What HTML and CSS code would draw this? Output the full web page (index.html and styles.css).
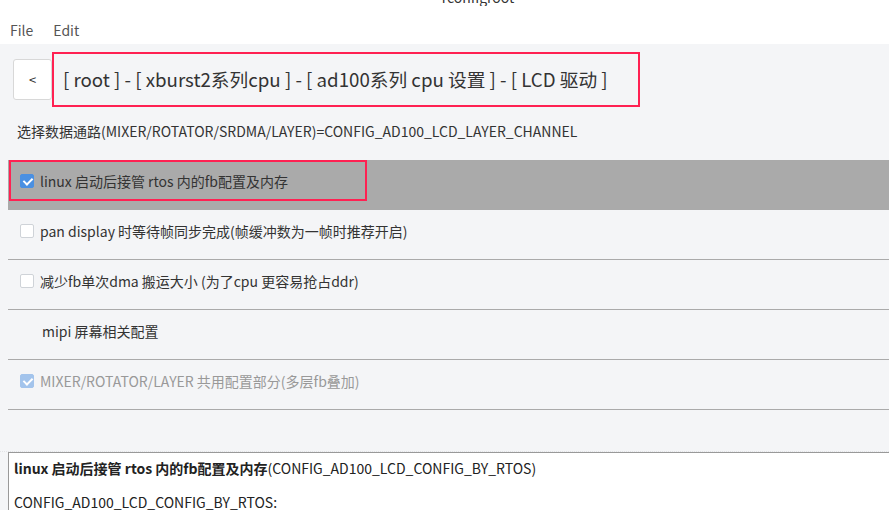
FILE: index.html
```html
<!DOCTYPE html>
<html>
    <head>
        <title>rconfigroot</title>
        <meta charset="UTF-8">
        <meta name="viewport" content="width=device-width, initial-scale=1.0">
        <link rel="stylesheet" href="styles.css">
    </head>
    <body>
        <header class="top">
            <div class="titlebar"><span>rconfigroot</span></div>
            <ul class="menu">
                <li>File</li>
                <li>Edit</li>
            </ul>
        </header>
        <section class="main">
            <div class="toolbar">
                <button class="back">&lt;</button>
                <div class="crumbs">[ root ] - [ xburst2系列cpu ] - [ ad100系列 cpu 设置 ] - [ LCD 驱动 ]</div>
            </div>
            <p class="desc">选择数据通路(MIXER/ROTATOR/SRDMA/LAYER)=CONFIG_AD100_LCD_LAYER_CHANNEL</p>
            <div class="rows">
                <div class="row selected">
                    <span class="box checked"></span>
                    <span>linux 启动后接管 rtos 内的fb配置及内存</span>
                    <div class="mark"></div>
                </div>
                <div class="row">
                    <span class="box"></span>
                    <span>pan display 时等待帧同步完成(帧缓冲数为一帧时推荐开启)</span>
                </div>
                <div class="row">
                    <span class="box"></span>
                    <span>减少fb单次dma 搬运大小 (为了cpu 更容易抢占ddr)</span>
                </div>
                <div class="row menuitem">
                    <span>mipi 屏幕相关配置</span>
                </div>
                <div class="row disabled">
                    <span class="box checked"></span>
                    <span>MIXER/ROTATOR/LAYER 共用配置部分(多层fb叠加)</span>
                </div>
            </div>
            <div class="splitter"></div>
            <div class="help">
                <p><strong>linux 启动后接管 rtos 内的fb配置及内存</strong>(CONFIG_AD100_LCD_CONFIG_BY_RTOS)</p>
                <p>CONFIG_AD100_LCD_CONFIG_BY_RTOS:</p>
            </div>
        </section>
    </body>
</html>
```

FILE: styles.css
```css
* {
    box-sizing: border-box;
}

body {
    margin: 0;
    height: 510px;
    overflow: hidden;
    font-family: "Noto Sans CJK SC", "Noto Sans", sans-serif;
    color: #333;
    background: #fff;
}

/* window title, cut off at the top */
.titlebar {
    height: 6px;
    overflow: hidden;
    text-align: center;
    padding-left: 67px;
    font-size: 14px;
    line-height: 20px;
    color: #333;
}
.titlebar span {
    display: block;
    margin-top: -13px;
}

.menu {
    list-style-type: none;
    margin: 0;
    padding: 14px 0 0 10px;
    height: 38px;
    display: flex;
    gap: 20px;
    font-size: 14px;
    color: #555;
}

.main {
    background: #f4f5f7;
    height: 466px;
    padding-top: 8px;
}

.toolbar {
    display: flex;
    align-items: center;
}

.back {
    margin-left: 13px;
    width: 39px;
    height: 41px;
    background: #fff;
    border: 1px solid #d8d8d8;
    border-radius: 3px;
    font-family: inherit;
    font-size: 13px;
    color: #333;
    padding: 0;
}

.crumbs {
    width: 588px;
    height: 55px;
    border: 2px solid #ff2152;
    padding-left: 9px;
    font-size: 18.7px;
    line-height: 50px;
    white-space: nowrap;
    color: #333;
}

.desc {
    margin: 0;
    padding: 14px 0 0 17px;
    height: 53px;
    font-size: 14px;
    color: #333;
}

.rows {
    margin-left: 8px;
}

.row {
    position: relative;
    height: 50px;
    border-bottom: 1px solid #aaa;
    display: flex;
    align-items: center;
    padding: 0 0 7px 12px;
    gap: 6px;
    font-size: 14px;
    color: #333;
}
.row.selected {
    background: #aaa;
}
.row.menuitem {
    padding-left: 34px;
}
.row.disabled {
    color: #999;
}

.box {
    width: 14px;
    height: 14px;
    border: 1px solid #cfd3d8;
    border-radius: 2px;
    background: #fff;
    position: relative;
}
.box.checked {
    background: #4a90e2;
    border-color: #4a90e2;
}
.disabled .box.checked {
    background: #a3c4ec;
    border-color: #a3c4ec;
}
.box.checked::after {
    content: "";
    position: absolute;
    left: 4px;
    top: 1px;
    width: 4px;
    height: 7px;
    border: solid #fff;
    border-width: 0 2px 2px 0;
    transform: rotate(45deg);
}

/* red annotation frame over the selected row */
.mark {
    position: absolute;
    left: 1px;
    top: 0;
    width: 358px;
    height: 41px;
    border: 2px solid #ff2152;
}

.splitter {
    height: 42px;
    border-bottom: 1px dotted #e2e3e6;
}

.help {
    margin-left: 8px;
    height: 70px;
    background: #fff;
    border: 1px solid #999;
    border-right: none;
    padding: 5px 0 0 5px;
    font-size: 14px;
    color: #222;
}
.help p {
    margin: 0 0 13px 0;
    line-height: 21px;
}
```
